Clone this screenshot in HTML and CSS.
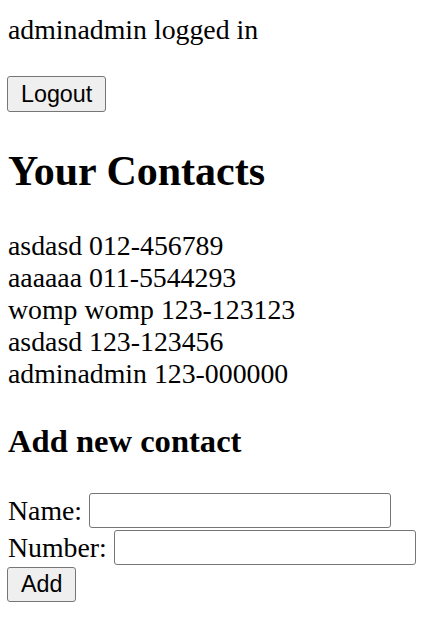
FILE: index.html
```html
<!DOCTYPE html>
<html>
<head>
<meta charset="utf-8">
<link rel="stylesheet" href="styles.css">
</head>
<body>
<p class="status">adminadmin logged in</p>
<div class="logout-wrap"><button class="btn" type="button">Logout</button></div>
<h2 class="title">Your Contacts</h2>
<div class="contacts">
  <div class="contact">asdasd 012-456789</div>
  <div class="contact">aaaaaa 011-5544293</div>
  <div class="contact">womp womp 123-123123</div>
  <div class="contact">asdasd 123-123456</div>
  <div class="contact">adminadmin 123-000000</div>
</div>
<h3 class="subtitle">Add new contact</h3>
<form class="form">
  <div class="row"><label class="label" for="name">Name:</label><input class="field" id="name" type="text"></div>
  <div class="row"><label class="label" for="number">Number:</label><input class="field" id="number" type="text"></div>
  <div class="row"><button class="btn" type="button">Add</button></div>
</form>
</body>
</html>
```
FILE: styles.css
```css
html, body {
  background: #ffffff;
}
body {
  margin: 0;
  padding: 14px 8px;
  font-family: "Liberation Serif", "Times New Roman", serif;
  font-size: 27.8px;
  line-height: 32px;
  color: #000000;
}
.status {
  margin: 0;
}
.logout-wrap {
  margin-top: 30px;
  display: flex;
}
.btn {
  font-family: "Liberation Sans", Arial, sans-serif;
  font-size: 23.3px;
  line-height: 27px;
  height: 35px;
  padding: 0 13px;
  margin: 0 0 0 -1px;
  background: #efefef;
  color: #000000;
  border: 1px solid #767676;
  border-radius: 3px;
  box-sizing: border-box;
}
.logout-wrap .btn {
  height: 36px;
}
.title {
  font-size: 42px;
  line-height: 48px;
  font-weight: bold;
  margin: 35px 0;
}
.contacts {
  display: flex;
  flex-direction: column;
}
.contact {
  line-height: 32px;
}
.subtitle {
  font-size: 32.6px;
  line-height: 38px;
  font-weight: bold;
  margin: 32px 0 32px;
}
.form {
  display: flex;
  flex-direction: column;
  margin: 0;
}
.row {
  display: flex;
  align-items: center;
  gap: 7px;
  height: 37px;
}
.label {
  line-height: 32px;
}
.field {
  width: 302px;
  height: 35px;
  box-sizing: border-box;
  border: 1px solid #767676;
  border-radius: 3px;
  padding: 1px 3px;
  font-family: "Liberation Sans", Arial, sans-serif;
  font-size: 23.3px;
  margin: 0;
  background: #ffffff;
}
```
